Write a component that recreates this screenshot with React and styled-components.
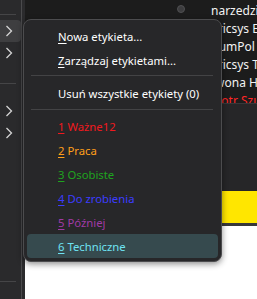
import React from 'react'
import { styled, createGlobalStyle } from "styled-components";

const GlobalStyle = createGlobalStyle`
    html, body {
        margin: 0;
        padding: 0;
        background: #1c1c1c;
        overflow: hidden;
    }
    * {
        box-sizing: border-box;
    }
`;

const labels = [
    { key: '1', text: 'Ważne12', color: '#f0191e' },
    { key: '2', text: 'Praca', color: '#ff9f1a' },
    { key: '3', text: 'Osobiste', color: '#1fa31f' },
    { key: '4', text: 'Do zrobienia', color: '#3c3cff' },
    { key: '5', text: 'Później', color: '#a03aa6' },
    { key: '6', text: 'Techniczne', color: '#6ee2f2', active: true },
];

const rows = [
    { text: 'narzedzia', dot: true },
    { text: 'Ericsys Ed' },
    { text: 'AumPol' },
    { text: 'Ericsys Tr' },
    { text: 'Iwona H.' },
    { text: 'Piotr Szu', color: '#ff2626' },
];

const Chevron = () => (
    <svg width="8" height="12" viewBox="0 0 8 12">
        <polyline points="1.5,1 6.5,6 1.5,11" fill="none" stroke="#d4d4d4" strokeWidth="1.3" />
    </svg>
)

const App = () => {
    return (
        <Page>
            <GlobalStyle />
            <Sidebar>
                <SideSep $top={14} />
                <SideRow $active>
                    <Chevron />
                </SideRow>
                <SideRow>
                    <Chevron />
                </SideRow>
                <SideSep $top={19} />
                <SideRow style={{ marginTop: 16 }}>
                    <Chevron />
                </SideRow>
                <SideRow>
                    <Chevron />
                </SideRow>
                <SideSep $bottom />
            </Sidebar>

            <Main>
                <MailList>
                    {rows.map((r, i) => (
                        <MailRow key={i} $color={r.color}>
                            <DotSlot>{r.dot && <StatusDot />}</DotSlot>
                            <span>{r.text}</span>
                        </MailRow>
                    ))}
                </MailList>
                <Preview />
                <Banner />
                <Blank />
            </Main>

            <Menu>
                <Item><u>N</u>owa etykieta...</Item>
                <Item><u>Z</u>arządzaj etykietami...</Item>
                <Separator $top={3} />
                <Item>Usuń wszystkie etykiety (0)</Item>
                <Separator $top={4} />
                {labels.map((l) => (
                    <Item key={l.key} $color={l.color} $active={l.active}>
                        <u>{l.key}</u>&nbsp;{l.text}
                    </Item>
                ))}
            </Menu>
        </Page>
    )
}

const Page = styled.div`
    position: relative;
    display: grid;
    grid-template-columns: 22px 1fr;
    height: 100vh;
    font-family: "Noto Sans", "Open Sans", sans-serif;
`;

const Sidebar = styled.aside`
    display: flex;
    flex-direction: column;
    background: #2a2a2c;
    border-right: 1px solid #4a4a4c;
`;

const SideSep = styled.div`
    flex: none;
    height: 1px;
    width: 16px;
    background: #454547;
    margin-top: ${p => p.$bottom ? 'auto' : `${p.$top}px`};
    margin-bottom: ${p => p.$bottom ? '17px' : p.$top === 14 ? '5px' : '0'};
`;

const SideRow = styled.div`
    flex: none;
    height: 22px;
    width: 21px;
    display: flex;
    align-items: center;
    padding-left: 5px;
    background: ${p => p.$active ? '#3e3e40' : 'transparent'};
    border-radius: 0 4px 4px 0;
`;

const Main = styled.main`
    display: flex;
    flex-direction: column;
    border-left: 3px solid #2b2b2d;
    background: #262628;
`;

const MailList = styled.div`
    height: 104px;
    padding-top: 1px;
    background: #1c1c1c;
    border-bottom: 1px solid #38383a;
    overflow: hidden;
`;

const MailRow = styled.div`
    display: flex;
    align-items: center;
    height: 18px;
    padding-left: 150px;
    gap: 24px;
    white-space: nowrap;
    font-size: 12px;
    color: ${p => p.$color || '#f2f2f2'};
`;

const DotSlot = styled.div`
    flex: none;
    width: 12px;
    display: flex;
    justify-content: center;
`;

const StatusDot = styled.div`
    width: 8px;
    height: 8px;
    margin-top: -3px;
    border-radius: 50%;
    background: #3c3c3e;
    border: 1px solid #505052;
`;

const Preview = styled.div`
    height: 87px;
`;

const Banner = styled.div`
    height: 35px;
    background: #ffe600;
    border-bottom: 3px solid #38383a;
`;

const Blank = styled.div`
    flex: 1;
    background: #ffffff;
`;

const Menu = styled.div`
    position: absolute;
    left: 23px;
    top: 19px;
    width: 199px;
    padding: 4px 3px 3px;
    background: #272729;
    border: 1px solid #4c4c4e;
    border-radius: 8px;
    box-shadow: 0 2px 6px rgba(0, 0, 0, 0.45);
`;

const Item = styled.div`
    height: 24px;
    display: flex;
    align-items: center;
    padding-left: 31px;
    border-radius: 4px;
    font-size: 11.3px;
    white-space: nowrap;
    color: ${p => p.$color || '#ffffff'};
    background: ${p => p.$active ? '#364a4e' : 'transparent'};

    u {
        text-underline-offset: 2px;
    }
`;

const Separator = styled.div`
    height: 9px;
    padding: ${p => p.$top}px 5px 0 4px;

    &::after {
        content: '';
        display: block;
        height: 1px;
        background: #434345;
    }
`;

export default App
